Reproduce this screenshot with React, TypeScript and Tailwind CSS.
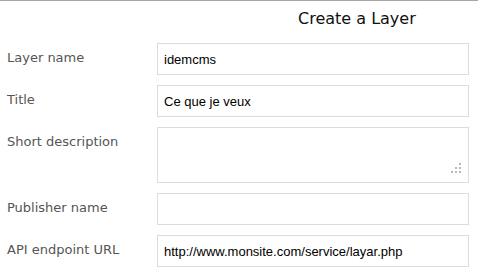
import React from "react";

const labelCls =
  "pl-[7px] pt-[7px] text-[13px] leading-[16px] text-[#555555] [font-family:'DejaVu_Sans',Verdana,sans-serif]";
const inputCls =
  "w-[312px] h-[32px] border border-[#dcdcdc] bg-white pl-[6px] text-[13px] text-black outline-none [font-family:'Liberation_Sans',Arial,sans-serif]";

function Row({ label, value }: { label: string; value: string }) {
  return (
    <>
      <div className={labelCls}>{label}</div>
      <input className={inputCls} value={value} readOnly />
    </>
  );
}

export default function App() {
  return (
    <div className="w-[478px] h-[269px] bg-white border-t border-[#a6a6a6] overflow-hidden">
      <div className="pl-[298px] pt-[8px] h-[42px] text-[16px] leading-[20px] text-[#111] [font-family:'DejaVu_Sans',Verdana,sans-serif]">
        Create a Layer
      </div>
      <div className="grid grid-cols-[157px_312px] gap-y-[10px]">
        <Row label="Layer name" value="idemcms" />
        <Row label="Title" value="Ce que je veux" />
        <div className={labelCls}>Short description</div>
        <div className="relative w-[312px] h-[56px]">
          <textarea
            className="block w-full h-full resize-none border border-[#dcdcdc] bg-white outline-none"
            readOnly
          />
          <svg
            className="absolute right-[8px] bottom-[10px]"
            width="10"
            height="10"
            viewBox="0 0 10 10"
          >
            <rect x="8" y="0" width="2" height="2" fill="#b8b8b8" />
            <rect x="4" y="4" width="2" height="2" fill="#b8b8b8" />
            <rect x="8" y="4" width="2" height="2" fill="#b8b8b8" />
            <rect x="0" y="8" width="2" height="2" fill="#b8b8b8" />
            <rect x="4" y="8" width="2" height="2" fill="#b8b8b8" />
            <rect x="8" y="8" width="2" height="2" fill="#b8b8b8" />
          </svg>
        </div>
        <Row label="Publisher name" value="" />
        <Row label="API endpoint URL" value="http://www.monsite.com/service/layar.php" />
      </div>
    </div>
  );
}
